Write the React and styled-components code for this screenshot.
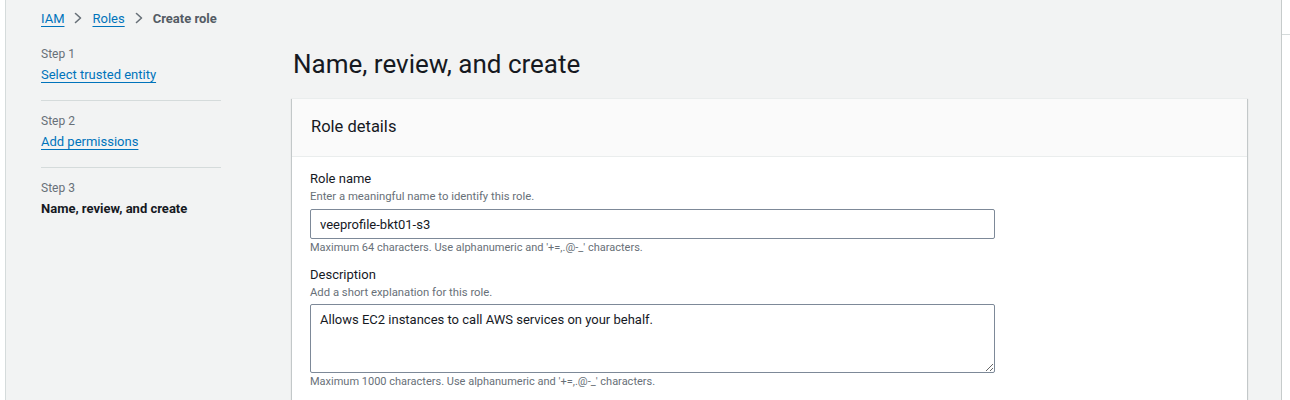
import React from "react";
import styled, { createGlobalStyle } from "styled-components";

const Global = createGlobalStyle`
  html, body { margin: 0; padding: 0; background: #ffffff; }
  body { font-family: Roboto, "Liberation Sans", Arial, sans-serif; color: #16191f; }
  * { box-sizing: border-box; }
`;

const Shell = styled.div`
  display: flex;
  height: 400px;
  overflow: hidden;
`;

const Gutter = styled.div`
  width: 5px;
  flex: none;
`;

const Panel = styled.div`
  flex: 1;
  background: #f2f3f3;
  border-left: 1px solid #d5dbdb;
  border-right: 1px solid #c6cbcb;
  padding: 8px 34px 0 35px;
`;

const SideStrip = styled.div`
  width: 8px;
  flex: none;
  padding-top: 34px;
`;

const StripLine = styled.div`
  border-top: 1px solid #d5dbdb;
`;

const Breadcrumbs = styled.nav`
  display: flex;
  align-items: center;
  height: 20px;
  font-size: 13px;
`;

const Crumb = styled.a`
  color: #0073bb;
  text-decoration: underline;
  text-underline-offset: 3px;
  cursor: pointer;
`;

const Current = styled.span`
  color: #545b64;
  font-weight: 700;
`;

const Sep = styled.span`
  display: inline-flex;
  width: 28px;
  justify-content: center;
  color: #687078;
`;

const Layout = styled.div`
  display: grid;
  grid-template-columns: 180px 1fr;
  column-gap: 71px;
`;

const Steps = styled.ol`
  list-style: none;
  margin: 6px 0 0;
  padding: 0;
`;

const StepItem = styled.li`
  padding: 12px 0 15px;
  border-bottom: ${(p) => (p.$last ? "none" : "1px solid #d5dbdb")};
`;

const StepLabel = styled.div`
  font-size: 12px;
  line-height: 16px;
  color: #687078;
`;

const StepLink = styled.a`
  display: inline-block;
  margin-top: 3px;
  font-size: 13px;
  line-height: 20px;
  color: #0073bb;
  text-decoration: underline;
  text-underline-offset: 3px;
`;

const StepCurrent = styled.div`
  margin-top: 3px;
  font-size: 13px;
  line-height: 20px;
  font-weight: 700;
  color: #16191f;
`;

const Main = styled.main`
  padding-top: 20px;
`;

const Title = styled.h1`
  margin: 0 0 0 1px;
  font-size: 26px;
  line-height: 32px;
  font-weight: 400;
  color: #16191f;
`;

const Container = styled.section`
  margin-top: 18px;
  background: #ffffff;
  box-shadow: 0 1px 1px 0 rgba(0, 28, 36, 0.3), 1px 1px 1px 0 rgba(0, 28, 36, 0.15),
    -1px 1px 1px 0 rgba(0, 28, 36, 0.15);
  border-top: 1px solid #eaeded;
`;

const Header = styled.header`
  height: 58px;
  background: #fafafa;
  border-bottom: 1px solid #eaeded;
  display: flex;
  align-items: center;
  padding: 0 0 2px 19px;
`;

const HeaderTitle = styled.h2`
  margin: 0;
  font-size: 16.5px;
  font-weight: 400;
  color: #16191f;
`;

const Body = styled.div`
  padding: 12px 18px 20px;
  display: flex;
  flex-direction: column;
  gap: 9px;
`;

const Field = styled.div`
  display: flex;
  flex-direction: column;
`;

const Label = styled.label`
  font-size: 13px;
  line-height: 20px;
  color: #16191f;
`;

const Hint = styled.div`
  font-size: ${(p) => (p.$desc ? 11.3 : 11)}px;
  line-height: 16px;
  color: #687078;
  margin-top: ${(p) => p.$top || 0}px;
`;

const TextInput = styled.input`
  margin-top: 4px;
  width: 685px;
  height: 30px;
  border: 1px solid #7d8998;
  border-radius: 2px;
  padding: 0 9px;
  font-family: inherit;
  font-size: 13px;
  color: #16191f;
  background: #fff;
  outline: none;
`;

const TextArea = styled.textarea`
  margin-top: 3px;
  width: 685px;
  height: 69px;
  border: 1px solid #7d8998;
  border-radius: 2px;
  padding: 6px 9px;
  font-family: inherit;
  font-size: 13px;
  line-height: 18px;
  color: #16191f;
  background: #fff;
  outline: none;
  resize: vertical;
  display: block;
`;

const Chevron = () => (
  <svg width="10" height="12" viewBox="0 0 10 12" fill="none">
    <polyline points="2.5,1.5 7.5,6 2.5,10.5" stroke="#687078" strokeWidth="1.6" strokeLinejoin="round" strokeLinecap="round" />
  </svg>
);

export default function App() {
  return (
    <>
      <Global />
      <Shell>
        <Gutter />
        <Panel>
          <Breadcrumbs>
            <Crumb>IAM</Crumb>
            <Sep><Chevron /></Sep>
            <Crumb>Roles</Crumb>
            <Sep><Chevron /></Sep>
            <Current>Create role</Current>
          </Breadcrumbs>
          <Layout>
            <Steps>
              <StepItem>
                <StepLabel>Step 1</StepLabel>
                <StepLink>Select trusted entity</StepLink>
              </StepItem>
              <StepItem>
                <StepLabel>Step 2</StepLabel>
                <StepLink>Add permissions</StepLink>
              </StepItem>
              <StepItem $last>
                <StepLabel>Step 3</StepLabel>
                <StepCurrent>Name, review, and create</StepCurrent>
              </StepItem>
            </Steps>
            <Main>
              <Title>Name, review, and create</Title>
              <Container>
                <Header>
                  <HeaderTitle>Role details</HeaderTitle>
                </Header>
                <Body>
                  <Field>
                    <Label>Role name</Label>
                    <Hint $desc>Enter a meaningful name to identify this role.</Hint>
                    <TextInput defaultValue="veeprofile-bkt01-s3" />
                    <Hint $top={1}>Maximum 64 characters. Use alphanumeric and '+=,.@-_' characters.</Hint>
                  </Field>
                  <Field>
                    <Label>Description</Label>
                    <Hint $desc>Add a short explanation for this role.</Hint>
                    <TextArea defaultValue="Allows EC2 instances to call AWS services on your behalf." />
                    <Hint $top={1}>Maximum 1000 characters. Use alphanumeric and '+=,.@-_' characters.</Hint>
                  </Field>
                </Body>
              </Container>
            </Main>
          </Layout>
        </Panel>
        <SideStrip>
          <StripLine />
        </SideStrip>
      </Shell>
    </>
  );
}
